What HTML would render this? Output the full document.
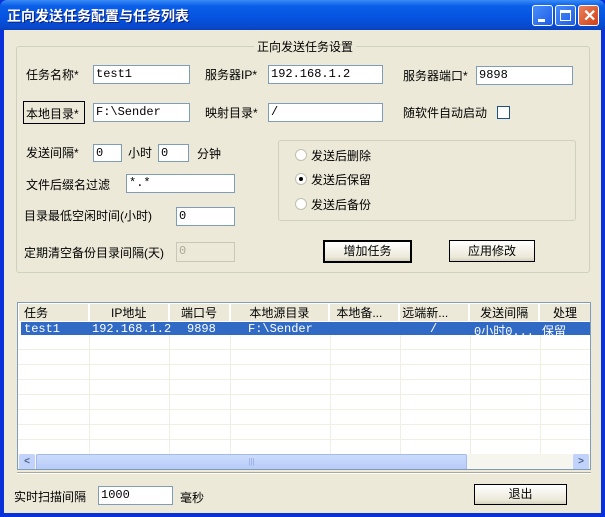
<!DOCTYPE html>
<html><head><meta charset="utf-8"><style>
*{box-sizing:border-box;margin:0;padding:0}
body{width:605px;height:517px;overflow:hidden;background:#0831d9;font:12px "Liberation Sans","Noto Sans CJK SC",sans-serif;color:#000;position:relative}
.title{position:absolute;left:0;top:0;width:605px;height:30px;background:linear-gradient(#3a8cf6,#0a5ee8 20%,#0553e0 60%,#0848cc 90%,#0a3fb8);border-radius:7px 7px 0 0}
.title span{position:absolute;left:7px;top:6px;color:#fff;font-weight:bold;font-size:14px;text-shadow:1px 1px #0a1e7a}
.body{position:absolute;left:4px;top:30px;width:597px;height:483px;background:#ece9d8}
.a{position:absolute;white-space:nowrap}
.in{position:absolute;background:#fff;border:1px solid #7f9db9;font:12px "Liberation Mono",monospace;padding:1px 2px;line-height:15px}
.grp{position:absolute;border:1px solid #d0d0bf;border-radius:3px}
.btn{position:absolute;background:linear-gradient(#fff,#ece9d8 80%,#d6d0c0);border:1px solid #003c74;border-radius:3px;text-align:center}
.rad{position:absolute;width:12px;height:12px;border-radius:50%;border:1px solid #c0c0b0;background:#fff}
.wbtn{position:absolute;top:5px;width:21px;height:21px;border:1px solid #fff;border-radius:3px;background:linear-gradient(135deg,#4a8cf8,#1d5ee8)}
table{border-collapse:collapse;font-size:12px}
.r1 span{position:absolute;top:0;line-height:13px;font:12px "Liberation Mono","Noto Sans CJK SC",monospace}
</style></head><body>
<div class="title"><span>正向发送任务配置与任务列表</span>
<div class="wbtn" style="left:532px"><div style="position:absolute;left:5px;top:13px;width:7px;height:3px;background:#fff"></div></div>
<div class="wbtn" style="left:555px"><div style="position:absolute;left:4px;top:4px;width:11px;height:11px;border:1px solid #fff;border-top-width:3px"></div></div>
<div class="wbtn" style="left:578px;background:linear-gradient(135deg,#e8805a,#d2401a)"><span style="left:4px;top:0;font-size:16px;text-shadow:none;font-weight:bold">✕</span></div>
</div>
<div class="body"></div>
<div class="grp" style="left:16px;top:46px;width:574px;height:227px"></div>
<div class="a" style="left:254px;top:38px;background:#ece9d8;padding:0 3px">正向发送任务设置</div>

<div class="a" style="left:26px;top:66px">任务名称*</div>
<div class="in" style="left:93px;top:65px;width:97px;height:19px">test1</div>
<div class="a" style="left:205px;top:66px">服务器IP*</div>
<div class="in" style="left:268px;top:65px;width:115px;height:19px">192.168.1.2</div>
<div class="a" style="left:403px;top:67px">服务器端口*</div>
<div class="in" style="left:476px;top:66px;width:97px;height:19px">9898</div>

<div class="a" style="left:23px;top:101px;width:62px;height:23px;border:1px solid #000;background:#ece9d8;padding:3px 0 0 2px">本地目录*</div>
<div class="in" style="left:93px;top:103px;width:97px;height:19px">F:\Sender</div>
<div class="a" style="left:205px;top:104px">映射目录*</div>
<div class="in" style="left:268px;top:103px;width:115px;height:19px">/</div>
<div class="a" style="left:403px;top:104px">随软件自动启动</div>
<div class="a" style="left:497px;top:106px;width:13px;height:13px;border:1px solid #1c5180;background:#fff"></div>

<div class="a" style="left:26px;top:144px">发送间隔*</div>
<div class="in" style="left:93px;top:144px;width:29px;height:18px">0</div>
<div class="a" style="left:128px;top:144px">小时</div>
<div class="in" style="left:158px;top:144px;width:31px;height:18px">0</div>
<div class="a" style="left:197px;top:145px">分钟</div>
<div class="a" style="left:26px;top:176px">文件后缀名过滤</div>
<div class="in" style="left:126px;top:174px;width:109px;height:19px">*.*</div>
<div class="a" style="left:24px;top:207px">目录最低空闲时间(小时)</div>
<div class="in" style="left:176px;top:207px;width:59px;height:19px">0</div>
<div class="a" style="left:24px;top:244px">定期清空备份目录间隔(天)</div>
<div class="in" style="left:176px;top:242px;width:59px;height:20px;background:#ece9d8;border-color:#c9c7ba;color:#aca899">0</div>

<div class="grp" style="left:278px;top:140px;width:298px;height:81px"></div>
<div class="rad" style="left:295px;top:149px"></div><div class="a" style="left:311px;top:147px">发送后删除</div>
<div class="rad" style="left:295px;top:173px"><div style="position:absolute;left:3px;top:3px;width:4px;height:4px;border-radius:50%;background:#000"></div></div><div class="a" style="left:311px;top:171px">发送后保留</div>
<div class="rad" style="left:295px;top:198px"></div><div class="a" style="left:311px;top:196px">发送后备份</div>

<div class="btn" style="left:323px;top:240px;width:89px;height:23px;border:2px solid #000;border-radius:0;line-height:19px">增加任务</div>
<div class="btn" style="left:449px;top:240px;width:86px;height:22px;border-color:#000;border-radius:0;line-height:20px">应用修改</div>

<div class="a" style="left:17px;top:302px;width:574px;height:168px;border:1px solid #7f9db9;background:#fff;overflow:hidden">
<table style="position:absolute;left:1px;top:1px">
<tr style="height:17px;background:#ece9d8">
<td style="width:70px;padding-left:5px;border-right:2px solid #fff">任务</td>
<td style="width:80px;text-align:center;border-right:2px solid #fff">IP地址</td>
<td style="width:61px;text-align:center;border-right:2px solid #fff">端口号</td>
<td style="width:100px;text-align:center;border-right:2px solid #fff">本地源目录</td>
<td style="width:70px;padding-left:6px;border-right:2px solid #fff">本地备...</td>
<td style="width:70px;padding-left:2px;border-right:2px solid #fff">远端新...</td>
<td style="width:70px;text-align:center;border-right:2px solid #fff">发送间隔</td>
<td style="width:51px;text-align:center">处理</td></tr>
</table>
<div style="position:absolute;left:3px;top:19px;width:570px;height:13px;background:#316ac5"></div>
<div class="r1" style="position:absolute;left:0;top:19px;width:572px;height:13px;color:#fff">
<span style="left:6px">test1</span><span style="left:74px">192.168.1.2</span><span style="left:169px">9898</span><span style="left:230px">F:\Sender</span><span style="left:412px">/</span><span style="left:456px">0小时0...</span><span style="left:524px">保留</span></div>
<div style="position:absolute;left:0;top:32px;width:572px;height:120px;background:repeating-linear-gradient(#fff 0 14px,#f1efe2 14px 15px)"></div>
<div style="position:absolute;left:0;top:32px;width:572px;height:120px;background:linear-gradient(90deg,transparent 71px,#f1efe2 71px 72px,transparent 72px 151px,#f1efe2 151px 152px,transparent 152px 212px,#f1efe2 212px 213px,transparent 213px 312px,#f1efe2 312px 313px,transparent 313px 382px,#f1efe2 382px 383px,transparent 383px 452px,#f1efe2 452px 453px,transparent 453px 522px,#f1efe2 522px 523px,transparent 523px)"></div>
<div style="position:absolute;left:0;top:151px;width:572px;height:16px;background:#f6f5ee">
<div style="position:absolute;left:1px;top:0;width:16px;height:16px;background:#c1d3fb;border-radius:2px;color:#4d6185;text-align:center;line-height:15px;font-size:10px;font-weight:bold">&lt;</div>
<div style="position:absolute;left:18px;top:0;width:431px;height:16px;background:linear-gradient(#cddcfc,#b7cbf8);border:1px solid #a3baf0;border-radius:2px;text-align:center;color:#8ea6dc;font-size:8px;line-height:14px">|||</div>
<div style="position:absolute;left:555px;top:0;width:16px;height:16px;background:#c1d3fb;border-radius:2px;color:#4d6185;text-align:center;line-height:15px;font-size:10px;font-weight:bold">&gt;</div>
</div></div>
<div class="a" style="left:17px;top:472px;width:574px;height:2px;border-top:1px solid #aca899;border-bottom:1px solid #fff"></div>

<div class="a" style="left:14px;top:488px">实时扫描间隔</div>
<div class="in" style="left:98px;top:486px;width:75px;height:19px">1000</div>
<div class="a" style="left:180px;top:489px">毫秒</div>
<div class="btn" style="left:474px;top:484px;width:93px;height:21px;border-color:#000;border-radius:0;line-height:19px">退出</div>
</body></html>
